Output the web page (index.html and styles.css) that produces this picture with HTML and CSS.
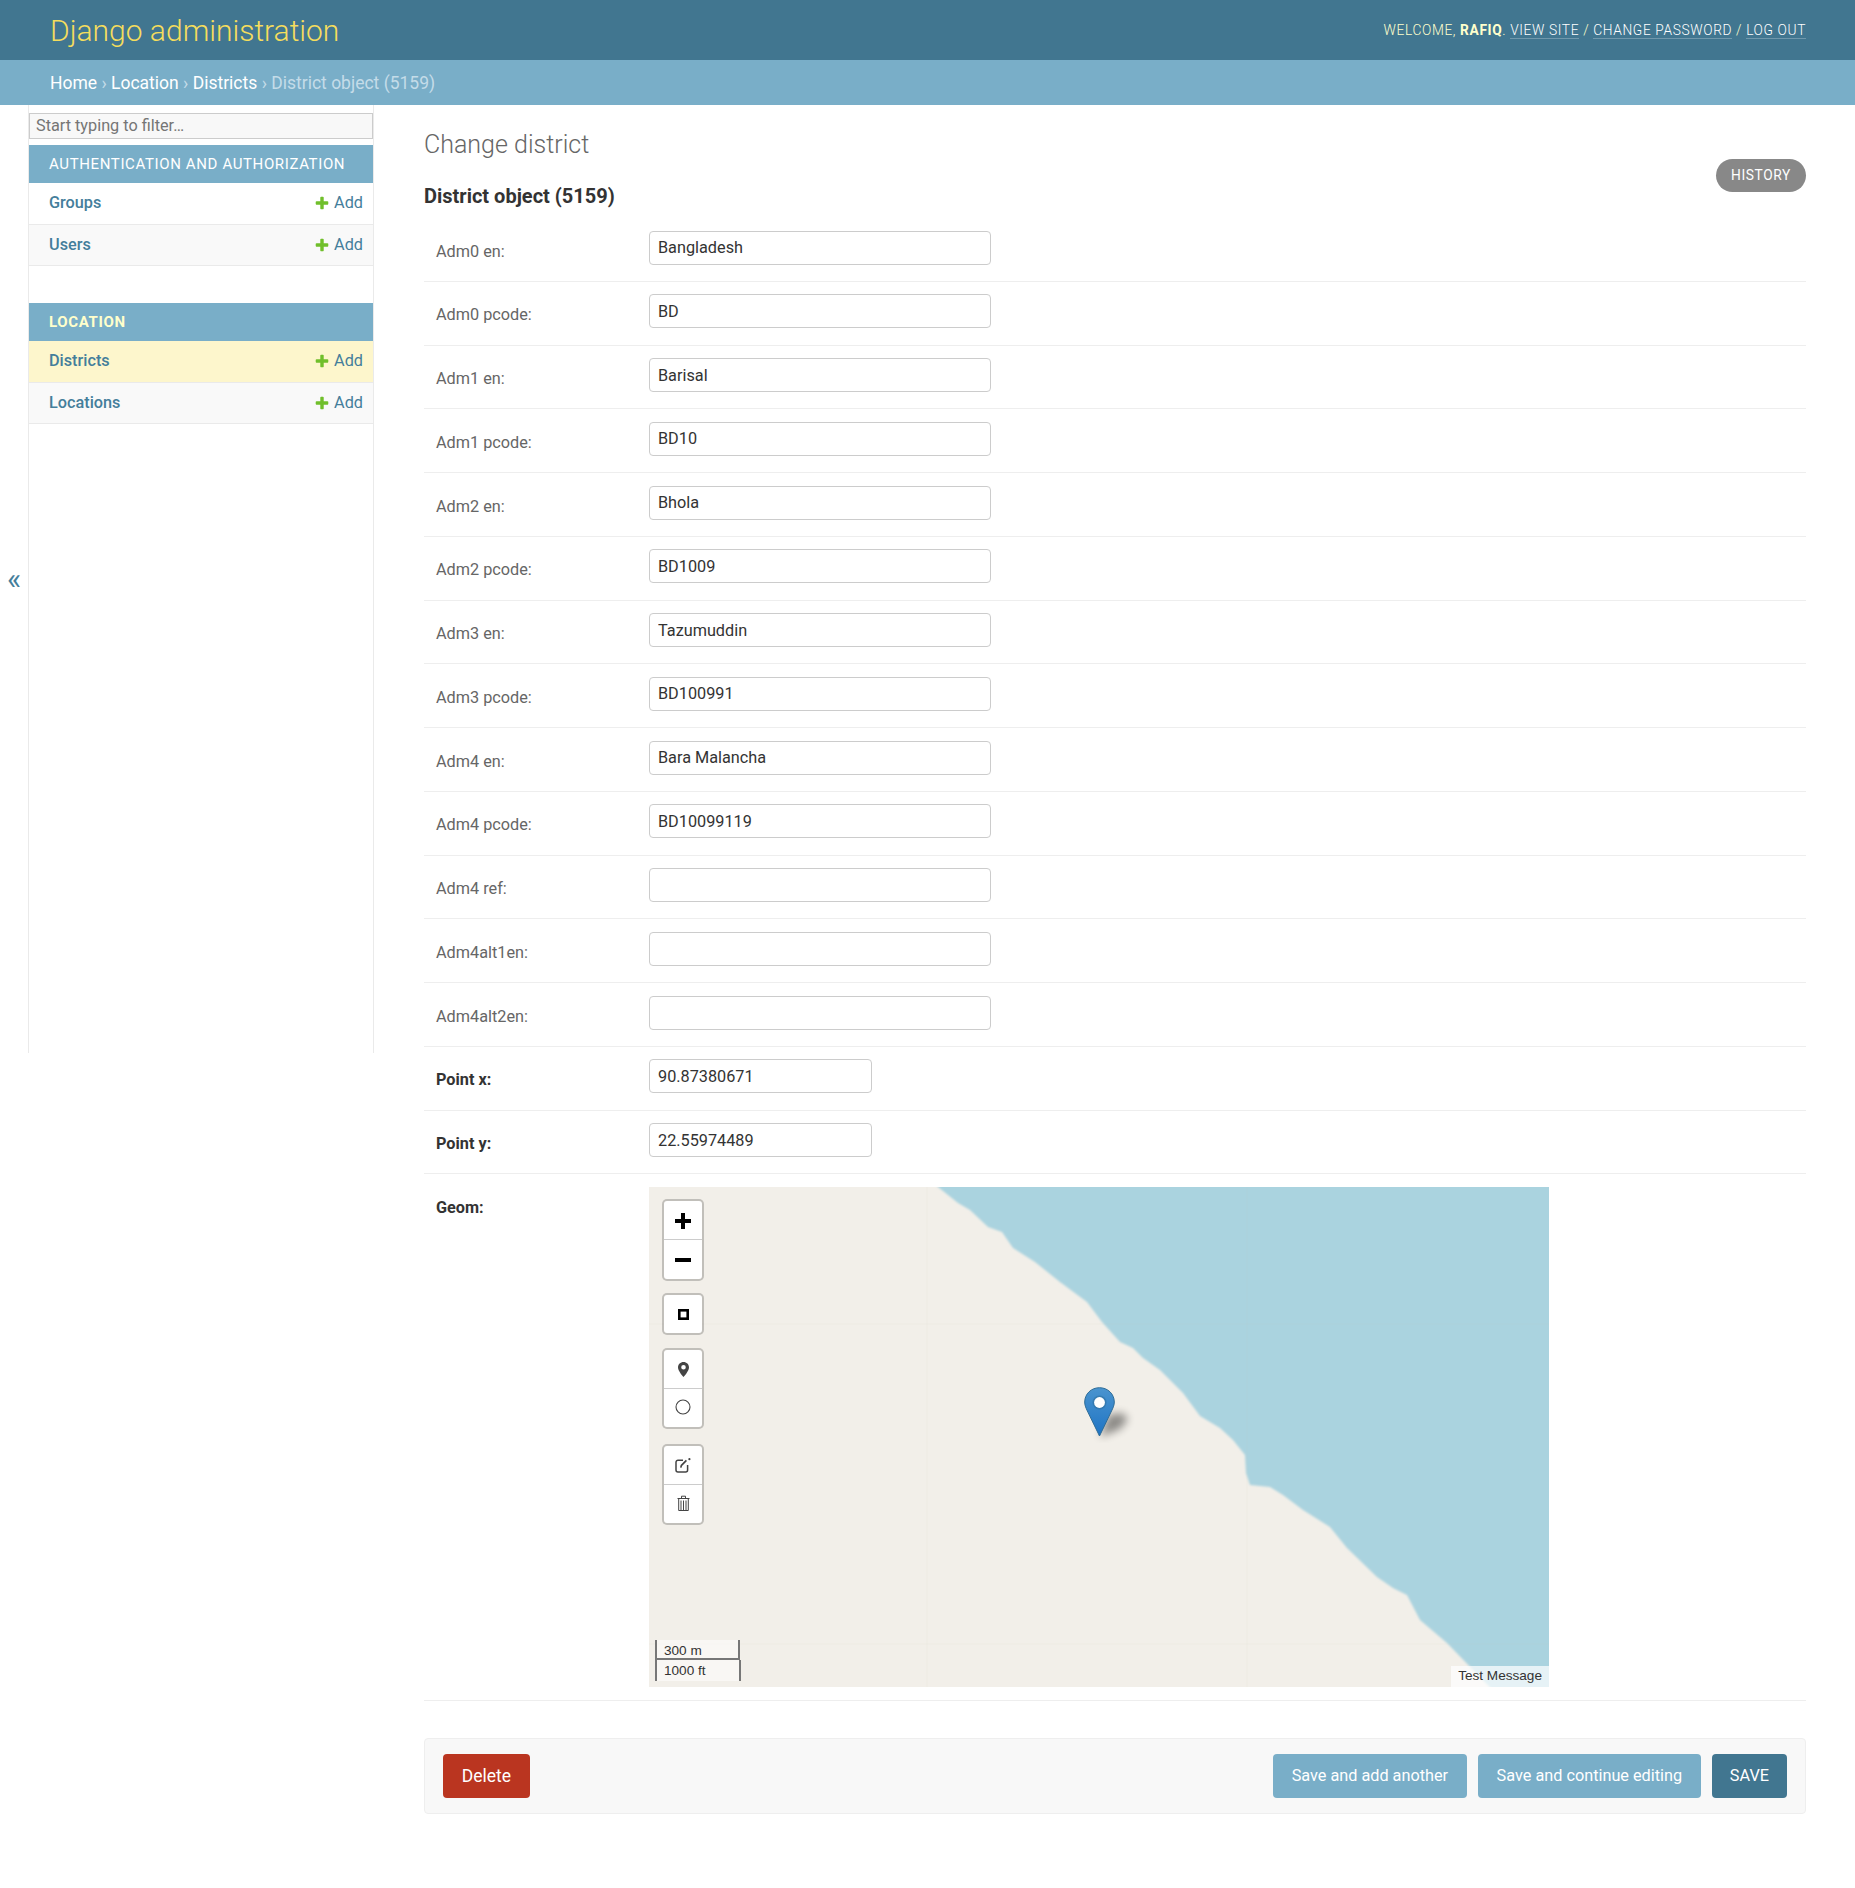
FILE: index.html
```html
<!DOCTYPE html>
<html lang="en">
<head>
  <meta charset="UTF-8">
  <title>Change district | Django site admin</title>
  <link rel="stylesheet" href="styles.css">
</head>
<body>

  <header class="site-header">
    <div class="site-name">Django administration</div>
    <div class="user-tools">
      Welcome, <strong>rafiq</strong>.
      <a href="#">View site</a> /
      <a href="#">Change password</a> /
      <a href="#">Log out</a>
    </div>
  </header>

  <div class="breadcrumbs">
    <a href="#">Home</a> › <a href="#">Location</a> › <a href="#">Districts</a> › District object (5159)
  </div>

  <div class="main">
    <div class="sidebar-toggle">«</div>

    <nav class="sidebar">
      <input class="nav-filter" type="search" placeholder="Start typing to filter…">

      <div class="app-title">Authentication and Authorization</div>
      <div class="model-row">
        <a class="model-name" href="#">Groups</a>
        <a class="add-link" href="#">
          <svg class="add-icon" viewBox="0 0 1792 1792"><path d="M1600 796v192q0 40-28 68t-68 28h-416v416q0 40-28 68t-68 28h-192q-40 0-68-28t-28-68v-416h-416q-40 0-68-28t-28-68v-192q0-40 28-68t68-28h416v-416q0-40 28-68t68-28h192q40 0 68 28t28 68v416h416q40 0 68 28t28 68z"/></svg>
          Add
        </a>
      </div>
      <div class="model-row model-row-alt">
        <a class="model-name" href="#">Users</a>
        <a class="add-link" href="#">
          <svg class="add-icon" viewBox="0 0 1792 1792"><path d="M1600 796v192q0 40-28 68t-68 28h-416v416q0 40-28 68t-68 28h-192q-40 0-68-28t-28-68v-416h-416q-40 0-68-28t-28-68v-192q0-40 28-68t68-28h416v-416q0-40 28-68t68-28h192q40 0 68 28t28 68v416h416q40 0 68 28t28 68z"/></svg>
          Add
        </a>
      </div>

      <div class="app-title app-title-current">Location</div>
      <div class="model-row model-row-current">
        <a class="model-name" href="#">Districts</a>
        <a class="add-link" href="#">
          <svg class="add-icon" viewBox="0 0 1792 1792"><path d="M1600 796v192q0 40-28 68t-68 28h-416v416q0 40-28 68t-68 28h-192q-40 0-68-28t-28-68v-416h-416q-40 0-68-28t-28-68v-192q0-40 28-68t68-28h416v-416q0-40 28-68t68-28h192q40 0 68 28t28 68v416h416q40 0 68 28t28 68z"/></svg>
          Add
        </a>
      </div>
      <div class="model-row model-row-alt">
        <a class="model-name" href="#">Locations</a>
        <a class="add-link" href="#">
          <svg class="add-icon" viewBox="0 0 1792 1792"><path d="M1600 796v192q0 40-28 68t-68 28h-416v416q0 40-28 68t-68 28h-192q-40 0-68-28t-28-68v-416h-416q-40 0-68-28t-28-68v-192q0-40 28-68t68-28h416v-416q0-40 28-68t68-28h192q40 0 68 28t28 68v416h416q40 0 68 28t28 68z"/></svg>
          Add
        </a>
      </div>
    </nav>

    <main class="content">
      <div class="content-head">
        <div>
          <h1>Change district</h1>
          <h2>District object (5159)</h2>
        </div>
        <a class="history-link" href="#">History</a>
      </div>

      <form>
        <div class="form-row"><label>Adm0 en:</label><input class="text-input" type="text" value="Bangladesh"></div>
        <div class="form-row"><label>Adm0 pcode:</label><input class="text-input" type="text" value="BD"></div>
        <div class="form-row"><label>Adm1 en:</label><input class="text-input" type="text" value="Barisal"></div>
        <div class="form-row"><label>Adm1 pcode:</label><input class="text-input" type="text" value="BD10"></div>
        <div class="form-row"><label>Adm2 en:</label><input class="text-input" type="text" value="Bhola"></div>
        <div class="form-row"><label>Adm2 pcode:</label><input class="text-input" type="text" value="BD1009"></div>
        <div class="form-row"><label>Adm3 en:</label><input class="text-input" type="text" value="Tazumuddin"></div>
        <div class="form-row"><label>Adm3 pcode:</label><input class="text-input" type="text" value="BD100991"></div>
        <div class="form-row"><label>Adm4 en:</label><input class="text-input" type="text" value="Bara Malancha"></div>
        <div class="form-row"><label>Adm4 pcode:</label><input class="text-input" type="text" value="BD10099119"></div>
        <div class="form-row"><label>Adm4 ref:</label><input class="text-input" type="text"></div>
        <div class="form-row"><label>Adm4alt1en:</label><input class="text-input" type="text"></div>
        <div class="form-row"><label>Adm4alt2en:</label><input class="text-input" type="text"></div>
        <div class="form-row"><label class="required">Point x:</label><input class="text-input number-input" type="text" value="90.87380671"></div>
        <div class="form-row"><label class="required">Point y:</label><input class="text-input number-input" type="text" value="22.55974489"></div>

        <div class="form-row map-row">
          <label class="required">Geom:</label>
          <div class="map">
            <svg class="map-tiles" viewBox="0 0 900 500">
              <defs>
                <filter id="soft" x="-5%" y="-5%" width="110%" height="110%"><feGaussianBlur stdDeviation="0.8"/></filter>
              </defs>
              <rect width="900" height="500" fill="#f2efe9"/>
              <path fill="#aad3df" filter="url(#soft)" d="M275 -20 L289 0 L309 16 L321 23 L339 40 L353 45 L364 61 L386 75 L411 95 L438 115 L453 135 L471 155 L484 161 L494 171 L511 183 L534 206 L551 229 L571 241 L584 253 L596 268 L597 286 L601 298 L621 300 L634 308 L654 323 L681 340 L698 361 L728 390 L744 401 L758 408 L771 433 L798 456 L860 520 L930 520 L930 -20 Z"/>
              <path class="tile-seams" d="M278 0V500M598 0V500M0 137H900M0 457H900"/>
            </svg>

            <div class="map-controls">
              <div class="control-bar control-bar-zoom">
                <a class="control-btn"><svg width="16" height="16" viewBox="0 0 16 16"><path d="M6 0h4v6h6v4h-6v6H6v-6H0V6h6z"/></svg></a>
                <a class="control-btn"><svg width="16" height="4" viewBox="0 0 16 4"><rect width="16" height="4"/></svg></a>
              </div>
              <div class="control-bar">
                <a class="control-btn"><svg width="11" height="11" viewBox="0 0 11 11"><rect x="1.3" y="1.3" width="8.4" height="8.4" fill="#fff" stroke="#000" stroke-width="2.6"/></svg></a>
              </div>
              <div class="control-bar">
                <a class="control-btn"><svg width="11" height="15" viewBox="0 0 11 15"><path fill="#444" d="M5.5 0C2.4 0 0 2.4 0 5.4 0 9 5.5 15 5.5 15S11 9 11 5.4C11 2.4 8.6 0 5.5 0zm0 7.6a2.3 2.3 0 1 1 0-4.6 2.3 2.3 0 0 1 0 4.6z"/></svg></a>
                <a class="control-btn control-btn-up"><svg width="16" height="16" viewBox="0 0 16 16"><circle cx="8" cy="8" r="7" fill="none" stroke="#444" stroke-width="1.1"/></svg></a>
              </div>
              <div class="control-bar control-bar-edit">
                <a class="control-btn"><svg width="16" height="15" viewBox="0 0 16 15"><path fill="none" stroke="#444" stroke-width="1.5" d="M8 2.2H3a2 2 0 0 0-2 2V12a2 2 0 0 0 2 2h7.6a2 2 0 0 0 2-2V7"/><path fill="none" stroke="#444" stroke-width="1.7" d="M5.8 9.6l.6-2.2 5-5"/><circle cx="14.4" cy="1.2" r="1.1" fill="#444"/></svg></a>
                <a class="control-btn control-btn-up"><svg width="13" height="16" viewBox="0 0 13 16"><path fill="none" stroke="#444" d="M.5 3.5h12M4.5 3V1.200h4V3M1.700 3.500v12h9.600v-12M4 5.500v10M6.500 5.500v10M9 5.500v10"/></svg></a>
              </div>
            </div>

            <svg class="map-marker" width="60" height="56" viewBox="0 0 60 56">
              <defs>
                <linearGradient id="pin" x1="0" y1="0" x2="0" y2="1">
                  <stop offset="0" stop-color="#4a94cf"/>
                  <stop offset="1" stop-color="#1f74c4"/>
                </linearGradient>
                <filter id="shade" filterUnits="userSpaceOnUse" x="0" y="0" width="60" height="56"><feGaussianBlur stdDeviation="4"/></filter>
              </defs>
              <path fill="#000" opacity=".42" filter="url(#shade)" d="M16 50 L24 28 L38 26 L44 32 L36 42 Z"/>
              <path fill="url(#pin)" stroke="#2e6c97" stroke-width="1" d="M15.5 .7C7.2 .7 .7 7 .7 15c0 3 1 5.400 2.200 8L15.500 49 28 23c1.200-2.600 2.300-5 2.300-8C30.300 7 23.800 .7 15.500 .7z"/>
              <circle cx="15.500" cy="15.500" r="7" fill="#2e6c97" opacity=".5"/>
              <circle cx="15.500" cy="15.500" r="5.400" fill="#fff"/>
            </svg>

            <div class="map-scale">
              <div class="scale-line">300 m</div>
              <div class="scale-line scale-line-ft">1000 ft</div>
            </div>
            <div class="map-attribution">Test Message</div>
          </div>
        </div>

        <div class="submit-row">
          <a class="btn btn-delete" href="#">Delete</a>
          <div class="submit-right">
            <button class="btn" type="button">Save and add another</button>
            <button class="btn" type="button">Save and continue editing</button>
            <button class="btn btn-default" type="button">SAVE</button>
          </div>
        </div>
      </form>
    </main>
  </div>

</body>
</html>
```

FILE: styles.css
```css
body {
  font-family: Roboto, 'Liberation Sans', sans-serif;
  font-size: 16.25px;
  color: #333;
  background-color: #fff;
  margin: 0;
  padding: 0;
}

a {
  color: #447e9b;
  text-decoration: none;
}

.site-header {
  display: flex;
  justify-content: space-between;
  align-items: center;
  height: 60px;
  padding: 0 49px 0 50px;
  background-color: #417690;
  color: #ffc;
}

.site-name {
  font-size: 30px;
  font-weight: 300;
  color: #f5dd5d;
}

.user-tools {
  font-size: 13.75px;
  font-weight: 300;
  letter-spacing: 0.625px;
  text-transform: uppercase;
}

.user-tools strong {
  font-weight: 700;
}

.user-tools a {
  color: #fff;
  border-bottom: 1px solid rgba(255, 255, 255, 0.25);
}

.breadcrumbs {
  height: 45px;
  box-sizing: border-box;
  padding: 0 50px;
  background-color: #79aec8;
  color: #c4dce8;
  font-size: 17.5px;
  line-height: 47px;
}

.breadcrumbs a {
  color: #fff;
}

.main {
  display: flex;
  align-items: flex-start;
}

.sidebar-toggle {
  flex: 0 0 28px;
  height: 948px;
  box-sizing: border-box;
  padding-bottom: 2px;
  display: flex;
  align-items: center;
  justify-content: center;
  font-size: 30px;
  color: #447e9b;
}

.sidebar {
  flex: 0 0 346px;
  height: 948px;
  box-sizing: border-box;
  border-left: 1px solid #eaeaea;
  border-right: 1px solid #eaeaea;
}

.nav-filter {
  display: block;
  width: 100%;
  height: 26px;
  box-sizing: border-box;
  margin: 8px 0 6px;
  padding: 0 6px 1px;
  border: 1px solid #ccc;
  background-color: #f8f8f8;
  font-family: inherit;
  font-size: 16.25px;
  outline: none;
}

.nav-filter::placeholder {
  color: #757575;
}

.app-title {
  height: 38px;
  padding: 0 20px;
  background-color: #79aec8;
  color: #fff;
  font-size: 15px;
  line-height: 38px;
  letter-spacing: 0.625px;
  text-transform: uppercase;
}

.app-title-current {
  margin-top: 37px;
  color: #ffc;
  font-weight: 700;
}

.model-row {
  display: flex;
  justify-content: space-between;
  align-items: center;
  height: 41.5px;
  box-sizing: border-box;
  padding: 0 10px 1px 20px;
  border-bottom: 1px solid #eaeaea;
}

.model-row-alt {
  background-color: #f9f9f9;
}

.model-row-current {
  background-color: #fdf6cc;
}

.model-name {
  font-weight: 500;
}

.add-icon {
  width: 16px;
  height: 16px;
  fill: #70bf2b;
  vertical-align: -3px;
}

.content {
  flex: 1;
  min-width: 0;
  padding: 0 49px 0 50px;
}

.content-head {
  display: flex;
  justify-content: space-between;
  align-items: flex-start;
  height: 113px;
}

h1 {
  margin: 25px 0 0;
  font-size: 25px;
  font-weight: 300;
  line-height: 30px;
  color: #666;
}

h2 {
  margin: 24px 0 0;
  font-size: 20px;
  font-weight: 700;
  line-height: 24px;
  color: #333;
}

.history-link {
  margin-top: 54px;
  padding: 0 15px;
  height: 33px;
  border-radius: 17px;
  background-color: #888;
  color: #fff;
  font-size: 13.75px;
  line-height: 33px;
  letter-spacing: 0.625px;
  text-transform: uppercase;
}

.form-row {
  display: grid;
  grid-template-columns: 213px 1fr;
  align-items: start;
  height: 63.75px;
  box-sizing: border-box;
  padding: 12.5px 0 0 12px;
  border-bottom: 1px solid #eee;
}

.form-row label {
  padding-top: 4px;
  line-height: 34px;
  color: #666;
}

.form-row label.required {
  font-weight: 700;
  color: #333;
}

.text-input {
  width: 342px;
  height: 34px;
  box-sizing: border-box;
  padding: 0 8px;
  border: 1px solid #ccc;
  border-radius: 4px;
  font-family: inherit;
  font-size: 16.25px;
  color: #333;
  outline: none;
}

.number-input {
  width: 223px;
}

.map-row {
  height: 527px;
  padding-top: 13px;
}

.map {
  position: relative;
  width: 900px;
  height: 500px;
  overflow: hidden;
}

.map-tiles {
  display: block;
  width: 900px;
  height: 500px;
}

.tile-seams {
  fill: none;
  stroke: rgba(200, 200, 180, 0.08);
  stroke-width: 1;
}

.map-controls {
  position: absolute;
  top: 12px;
  left: 13px;
  display: flex;
  flex-direction: column;
  gap: 13px;
}

.control-bar {
  width: 42px;
  box-sizing: border-box;
  border: 2px solid rgba(0, 0, 0, 0.2);
  border-radius: 5px;
  background-clip: padding-box;
  background-color: #fff;
}

.control-bar-zoom {
  margin-bottom: -1.5px;
}

.control-bar-zoom .control-btn {
  height: 39px;
}

.control-bar-zoom .control-btn:first-child {
  padding-top: 2px;
}

.control-bar-edit {
  margin-top: 2px;
}

.control-btn {
  display: flex;
  align-items: center;
  justify-content: center;
  height: 38.5px;
  box-sizing: border-box;
  border-bottom: 1px solid #ccc;
}

.control-btn:last-child {
  border-bottom: none;
}

.control-btn-up {
  padding-bottom: 3px;
}

.map-marker {
  position: absolute;
  left: 435px;
  top: 200px;
}

.map-scale {
  position: absolute;
  left: 6px;
  bottom: 6px;
  font-family: 'Liberation Sans', Arial, sans-serif;
  font-size: 13.6px;
  color: #333;
}

.scale-line {
  width: 85px;
  height: 20px;
  box-sizing: border-box;
  padding-left: 7px;
  border: 2px solid #777;
  border-top: none;
  background-color: rgba(255, 255, 255, 0.5);
  line-height: 22px;
}

.scale-line-ft {
  width: 86px;
  height: 21px;
  border-bottom: none;
}

.map-attribution {
  position: absolute;
  right: 0;
  bottom: 0;
  height: 21px;
  padding: 0 7px;
  background-color: rgba(255, 255, 255, 0.7);
  font-family: 'Liberation Sans', Arial, sans-serif;
  font-size: 13.6px;
  line-height: 19px;
  color: #333;
}

.submit-row {
  display: flex;
  justify-content: space-between;
  margin-top: 37px;
  padding: 15px 18px;
  border: 1px solid #eee;
  border-radius: 4px;
  background-color: #f8f8f8;
}

.submit-right {
  display: flex;
  gap: 11px;
}

.btn {
  display: block;
  height: 44px;
  padding: 0 18.75px;
  border: none;
  border-radius: 4px;
  background-color: #79aec8;
  color: #fff;
  font-family: inherit;
  font-size: 16.25px;
  line-height: 44px;
}

.btn-delete {
  background-color: #ba3520;
  font-size: 17.5px;
}

.btn-default {
  padding: 0 18px;
  background-color: #417690;
}
```
